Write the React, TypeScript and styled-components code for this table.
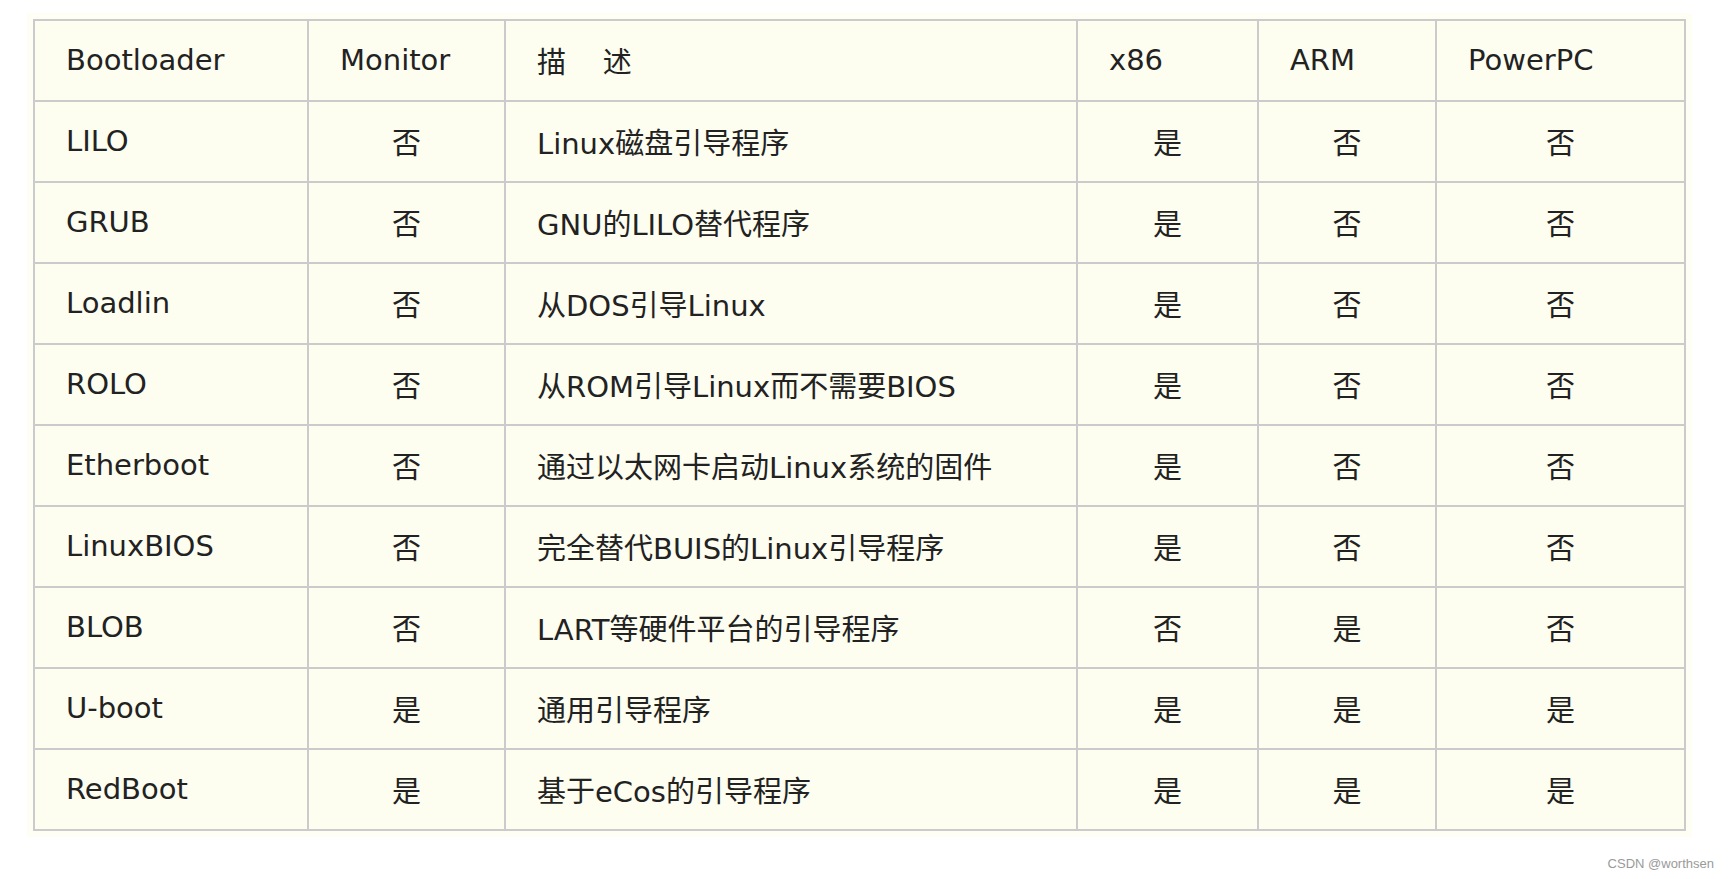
import React from "react";
import styled, { createGlobalStyle } from "styled-components";

const Global = createGlobalStyle`
  html, body { margin: 0; padding: 0; background: #ffffff; }
  body { font-family: "DejaVu Sans", "Noto Sans CJK SC", sans-serif; }
`;

const Page = styled.div`
  position: relative;
  width: 1729px;
  height: 879px;
  box-sizing: border-box;
  padding: 13px 0 0 27px;
`;

const Frame = styled.div`
  display: inline-block;
  padding: 6px;
  background: #fefef4;
`;

const Grid = styled.div`
  display: grid;
  grid-template-columns: 272px 195px 570px 179px 176px 247px;
  grid-auto-rows: 79px;
  gap: 2px;
  padding: 2px;
  background: #cbcbcb;
`;

const Cell = styled.div<{ $center?: boolean }>`
  display: flex;
  align-items: center;
  justify-content: ${(p) => (p.$center ? "center" : "flex-start")};
  padding: ${(p) => (p.$center ? "0 0 1px 0" : "0 0 1px 31px")};
  background: #fdfdf0;
  color: #222222;
  font-family: "DejaVu Sans", "Noto Sans CJK SC", sans-serif;
  font-size: 29px;
  white-space: nowrap;
  box-sizing: border-box;
`;

const Watermark = styled.div`
  position: absolute;
  right: 15px;
  bottom: 8px;
  font-family: "Liberation Sans", Arial, sans-serif;
  font-size: 13px;
  color: #9a9a9a;
`;

const headers = ["Bootloader", "Monitor", "描\u00a0\u00a0\u00a0\u00a0述", "x86", "ARM", "PowerPC"];

const rows: string[][] = [
  ["LILO", "否", "Linux磁盘引导程序", "是", "否", "否"],
  ["GRUB", "否", "GNU的LILO替代程序", "是", "否", "否"],
  ["Loadlin", "否", "从DOS引导Linux", "是", "否", "否"],
  ["ROLO", "否", "从ROM引导Linux而不需要BIOS", "是", "否", "否"],
  ["Etherboot", "否", "通过以太网卡启动Linux系统的固件", "是", "否", "否"],
  ["LinuxBIOS", "否", "完全替代BUIS的Linux引导程序", "是", "否", "否"],
  ["BLOB", "否", "LART等硬件平台的引导程序", "否", "是", "否"],
  ["U-boot", "是", "通用引导程序", "是", "是", "是"],
  ["RedBoot", "是", "基于eCos的引导程序", "是", "是", "是"],
];

const centered = [false, true, false, true, true, true];

export default function App() {
  return (
    <Page>
      <Global />
      <Frame>
        <Grid>
          {headers.map((h, i) => (
            <Cell key={"h" + i}>{h}</Cell>
          ))}
          {rows.map((r, ri) =>
            r.map((c, ci) => (
              <Cell key={ri + "-" + ci} $center={centered[ci]}>
                {c}
              </Cell>
            ))
          )}
        </Grid>
      </Frame>
      <Watermark>CSDN @worthsen</Watermark>
    </Page>
  );
}
